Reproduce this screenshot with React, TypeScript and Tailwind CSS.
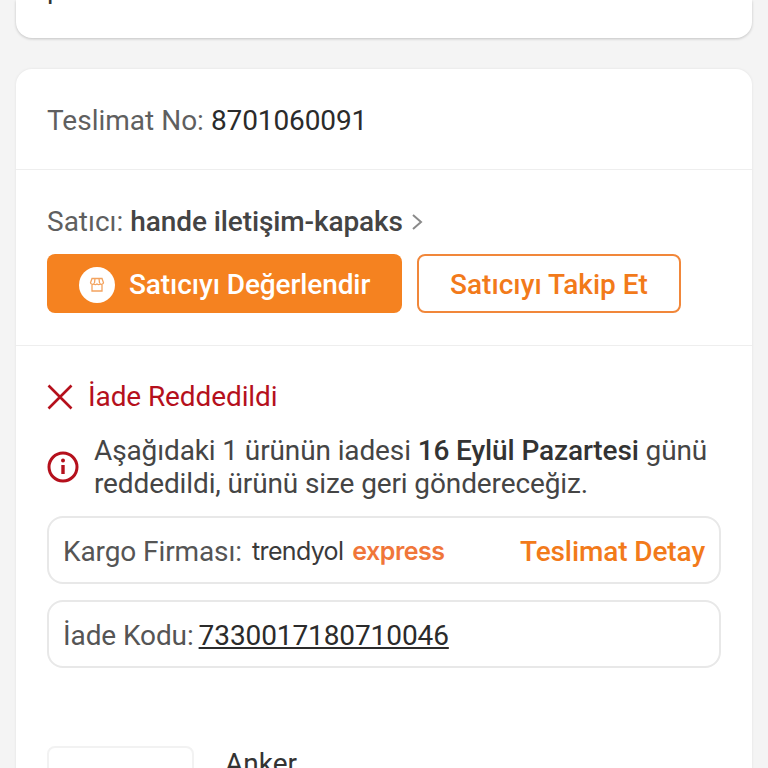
const BoxBorder = "rounded-[16px] border-2 border-[#e8e8e8]";

const StoreIcon = () => (
  <svg width="18" height="18" viewBox="0 0 18 18" fill="none" stroke="#f3a35f" strokeWidth="1.3">
    <path d="M4 2.5h10l1.5 4.2a2 2 0 0 1-3.2 1.2 2.3 2.3 0 0 1-3.3 0 2.3 2.3 0 0 1-3.3 0 2 2 0 0 1-3.2-1.2z" />
    <path d="M4 9v6h10V9M7 2.5l-.6 5M11 2.5l.6 5" />
  </svg>
);

const App = () => {
  return (
    <div className="h-[768px] overflow-hidden bg-[#f4f4f4] px-4 font-['Roboto',sans-serif] text-[28px]">
      {/* Previous card, cut off at the top */}
      <div className="h-[38px] overflow-hidden rounded-b-[16px] bg-white shadow-[0_1px_3px_rgba(0,0,0,0.2)]">
        <p className="mt-[-27px] ml-[31px] leading-[32px] text-[#333]">p</p>
      </div>

      <div className="mt-[31px] rounded-t-[16px] bg-white shadow-[0_0_3px_rgba(0,0,0,0.08)]">
        {/* Delivery number */}
        <div className="flex h-[101px] items-center border-b border-[#eeeeee] pl-[31px] pt-[3px]">
          <span className="text-[#5f5f5f]">Teslimat No:</span>
          <span className="ml-[7px] tracking-[-0.1px] text-[#2b2b2b]">8701060091</span>
        </div>

        {/* Seller */}
        <div className="h-[176px] border-b border-[#eeeeee] px-[31px] pt-[34px]">
          <div className="flex h-[36px] items-center">
            <span className="text-[#5f5f5f]">Satıcı:</span>
            <span className="ml-[7px] font-medium tracking-[-0.1px] text-[#444444]">hande iletişim-kapaks</span>
            <svg className="ml-[7px]" width="14" height="20" viewBox="0 0 14 20" fill="none" stroke="#8a8a8a" strokeWidth="2">
              <path d="M3 3l8 7-8 7" />
            </svg>
          </div>
          <div className="mt-[14px] flex gap-[15px]">
            <button className="flex h-[59px] w-[355px] items-center rounded-[8px] bg-[#f58220] pl-[32px] pt-[2px] font-medium tracking-[-0.1px] text-white">
              <span className="mr-[14px] flex h-9 w-9 items-center justify-center rounded-full bg-white">
                <StoreIcon />
              </span>
              Satıcıyı Değerlendir
            </button>
            <button className="h-[59px] w-[264px] rounded-[8px] border-2 border-[#f1873a] pt-[2px] font-medium text-[#f27a1a]">
              Satıcıyı Takip Et
            </button>
          </div>
        </div>

        {/* Return status */}
        <div className="px-[31px] pt-[34px]">
          <div className="flex h-[34px] items-center text-[#b5101c]">
            <svg width="26" height="26" viewBox="0 0 26 26" fill="none" stroke="#b5101c" strokeWidth="2.6">
              <path d="M1.5 1.5l23 23M24.5 1.5l-23 23" />
            </svg>
            <span className="ml-[15px] tracking-[-0.1px]">İade Reddedildi</span>
          </div>

          <div className="mt-[20px] flex items-center">
            <svg width="32" height="32" viewBox="0 0 32 32" fill="none" stroke="#b5101c">
              <circle cx="16" cy="16" r="14" strokeWidth="3" />
              <path d="M16 14v9" strokeWidth="3.4" />
              <circle cx="16" cy="9.5" r="2" fill="#b5101c" stroke="none" />
            </svg>
            <p className="ml-[15px] whitespace-nowrap leading-[33px] tracking-[-0.12px] text-[#454545]">
              Aşağıdaki 1 ürünün iadesi <span className="font-medium text-[#333]">16 Eylül Pazartesi</span> günü
              <br />
              reddedildi, ürünü size geri göndereceğiz.
            </p>
          </div>

          <div className={`${BoxBorder} mt-[16px] flex h-[68px] items-center justify-between px-[14px] pt-[3px]`}>
            <div className="flex items-center">
              <span className="tracking-[-0.1px] text-[#555555]">Kargo Firması:</span>
              <span className="ml-[10px] font-['Inter',sans-serif] text-[25px] tracking-[-0.65px] text-[#3a3a3a]">trendyol</span>
              <span className="ml-[9px] font-['Inter',sans-serif] text-[25px] font-semibold tracking-[-0.5px] text-[#f0763a]">express</span>
            </div>
            <span className="font-medium tracking-[-0.1px] text-[#f27a1a]">Teslimat Detay</span>
          </div>

          <div className={`${BoxBorder} mt-4 flex h-[68px] items-center pl-[14px] pt-[3px]`}>
            <span className="tracking-[-0.1px] text-[#555555]">İade Kodu:</span>
            <span className="ml-[5px] tracking-[-0.1px] text-[#2b2b2b] underline">7330017180710046</span>
          </div>

          {/* Product row */}
          <div className="mt-[78px] flex">
            <div className="h-[120px] w-[147px] shrink-0 rounded-[8px] border-2 border-[#f2f2f2]" />
            <span className="ml-[31px] mt-[2px] leading-[32px] text-[#333]">Anker</span>
          </div>
        </div>
      </div>
    </div>
  );
};

export default App;
